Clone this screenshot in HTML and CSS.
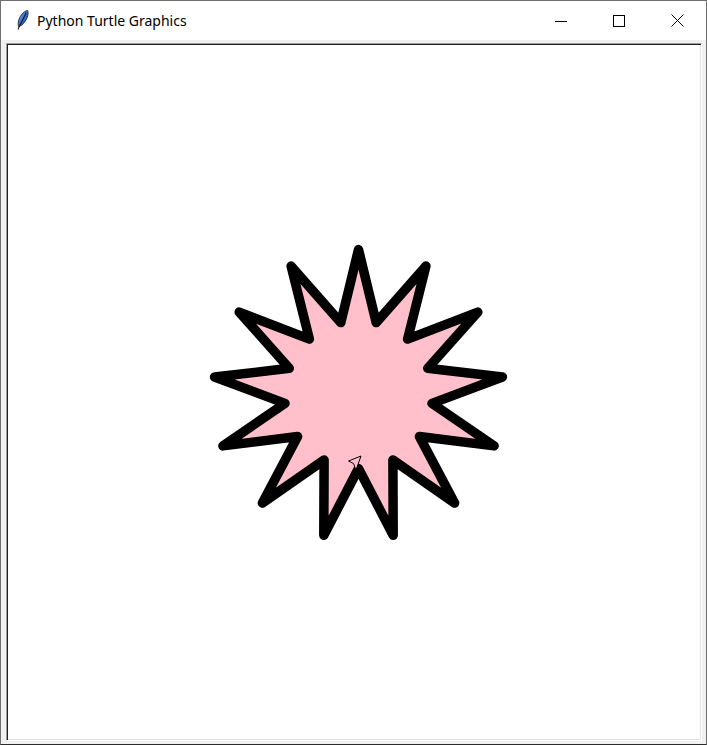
FILE: index.html
```html
<!DOCTYPE html>
<html>
<head>
<meta charset="utf-8">
<title>Python Turtle Graphics</title>
<link rel="stylesheet" href="styles.css">
</head>
<body>
<div class="window">
  <div class="titlebar">
    <div class="title">
      <svg class="app-icon" width="14" height="20" viewBox="0 0 14 20">
        <defs>
          <linearGradient id="fg" x1="0" y1="0" x2="1" y2="1">
            <stop offset="0" stop-color="#a8ccff"/>
            <stop offset="0.45" stop-color="#3a78dd"/>
            <stop offset="1" stop-color="#1c3f86"/>
          </linearGradient>
        </defs>
        <path d="M12.5 0.5 C14 3 12.5 8 10 11.5 C8 14.5 5.8 16 3.6 16.6 C2.4 13 3.8 8.5 6.3 5 C8.3 2.3 10.8 0.6 12.5 0.5 Z" fill="url(#fg)" stroke="#1d2333" stroke-width="0.9"/>
        <path d="M11.2 2.8 L4.3 16.4 L3 19.5" fill="none" stroke="#1a1a1a" stroke-width="1.1"/>
      </svg>
      <span class="title-text">Python Turtle Graphics</span>
    </div>
    <div class="controls">
      <div class="ctrl">
        <svg width="12" height="12" viewBox="0 0 12 12"><path d="M0 6.5 H12" stroke="#000" stroke-width="1"/></svg>
      </div>
      <div class="ctrl">
        <svg width="12" height="12" viewBox="0 0 12 12"><rect x="0.5" y="0.5" width="11" height="11" fill="none" stroke="#000" stroke-width="1"/></svg>
      </div>
      <div class="ctrl">
        <svg width="13" height="13" viewBox="0 0 13 13"><path d="M0.5 0.5 L12.5 12.5 M12.5 0.5 L0.5 12.5" stroke="#000" stroke-width="1"/></svg>
      </div>
    </div>
  </div>
  <div class="client">
    <div class="canvas">
      <svg class="drawing" width="692" height="694" viewBox="8 45 692 694">
        <polygon class="star" points="358.5,249.5 376.2,322.6 425.9,266.1 407.6,339.1 477.8,312.1 427.7,368.3 502.4,377.0 432.0,403.4 494.1,445.9 419.4,436.5 454.6,503.0 392.9,460.0 393.2,535.3 358.5,468.5 323.8,535.3 324.1,460.0 262.4,503.0 297.6,436.5 222.9,445.9 285.0,403.4 214.6,377.0 289.3,368.3 239.2,312.1 309.4,339.1 291.1,266.1 340.8,322.6"/>
        <polygon class="turtle" points="361,456 348.5,461 353.5,463.5 356,470"/>
      </svg>
    </div>
  </div>
</div>
</body>
</html>
```
FILE: styles.css
```css
html, body {
  margin: 0;
  padding: 0;
  background: #ffffff;
}

.window {
  width: 707px;
  height: 745px;
  box-sizing: border-box;
  border: 1px solid #6f6f6f;
  border-bottom-color: #2b2b2b;
  display: flex;
  flex-direction: column;
  background: #f0f0f0;
  overflow: hidden;
}

.titlebar {
  height: 39px;
  flex: none;
  background: #ffffff;
  display: flex;
  justify-content: space-between;
  align-items: stretch;
}

.title {
  display: flex;
  align-items: center;
  gap: 8px;
  padding-left: 14px;
}

.app-icon {
  display: block;
  margin-top: -1px;
}

.title-text {
  font-family: "Segoe UI", "Noto Sans", "Open Sans", sans-serif;
  font-size: 14px;
  color: #000000;
  margin-top: -1px;
}

.controls {
  display: flex;
}

.ctrl {
  width: 58px;
  height: 39px;
  display: flex;
  align-items: center;
  justify-content: center;
}

.ctrl svg {
  display: block;
}

.client {
  flex: 1;
  padding: 3px 4px 3px 5px;
  display: flex;
}

.canvas {
  width: 696px;
  height: 698px;
  box-sizing: border-box;
  border: 1px solid;
  border-color: #a0a0a0 #ffffff #ffffff #a0a0a0;
  box-shadow: inset 1px 1px 0 #1e1e1e, inset -1px -1px 0 #e3e3e3;
  background: #ffffff;
  padding: 1px;
}

.drawing {
  display: block;
}

.star {
  fill: #ffc0cb;
  stroke: #000000;
  stroke-width: 9.5;
  stroke-linejoin: round;
}

.turtle {
  fill: #ffc0cb;
  stroke: #000000;
  stroke-width: 1;
  stroke-linejoin: miter;
}
```
